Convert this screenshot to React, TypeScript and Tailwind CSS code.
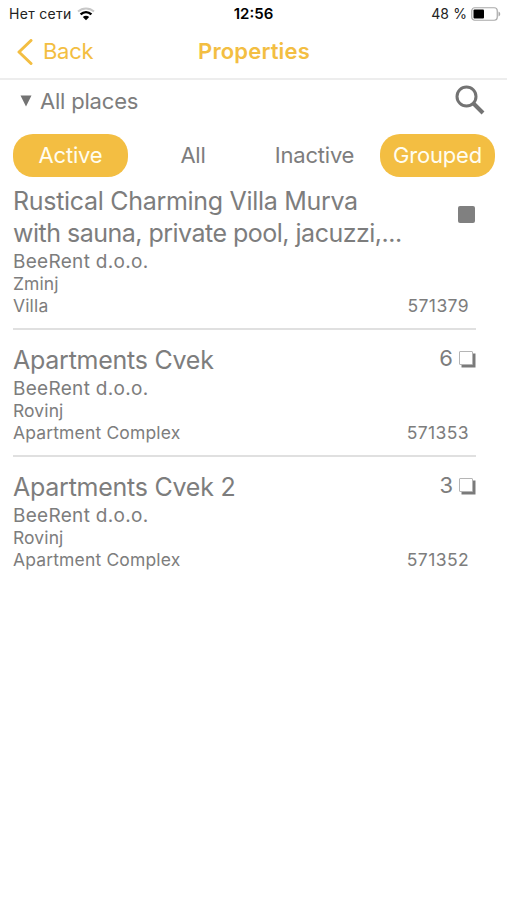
import React from "react";

type Property = {
  title: { text: string; tracking: string }[];
  owner: string;
  place: string;
  kind: string;
  id: string;
  units?: number;
};

const properties: Property[] = [
  {
    title: [
      { text: "Rustical Charming Villa Murva", tracking: "tracking-[-0.3px]" },
      { text: "with sauna, private pool, jacuzzi,...", tracking: "tracking-[-0.51px]" },
    ],
    owner: "BeeRent d.o.o.",
    place: "Zminj",
    kind: "Villa",
    id: "571379",
  },
  {
    title: [{ text: "Apartments Cvek", tracking: "tracking-[-0.25px]" }],
    owner: "BeeRent d.o.o.",
    place: "Rovinj",
    kind: "Apartment Complex",
    id: "571353",
    units: 6,
  },
  {
    title: [{ text: "Apartments Cvek 2", tracking: "tracking-[-0.25px]" }],
    owner: "BeeRent d.o.o.",
    place: "Rovinj",
    kind: "Apartment Complex",
    id: "571352",
    units: 3,
  },
];

function StatusBar() {
  return (
    <div className="grid h-[27px] grid-cols-3 items-center pl-[9px] pr-[6px] text-[14px] text-[#222]">
      <div className="flex items-center gap-[5px]">
        <span className="tracking-[0.3px]">Нет сети</span>
        <svg width="18" height="14" viewBox="0 0 18 14" fill="none">
          <path d="M1 4.600C5.500.400 12.500.400 17 4.600" stroke="#c8c8c8" strokeWidth="2" />
          <path d="M3.600 7.400C6.800 4.400 11.200 4.400 14.400 7.400" stroke="#000" strokeWidth="2.400" />
          <path d="M5.800 10C7.600 8.400 10.400 8.400 12.200 10L9 13.200Z" fill="#000" />
        </svg>
      </div>
      <div className="pr-[3px] pt-[2px] text-center text-[15px] font-semibold text-black">12:56</div>
      <div className="flex items-center justify-end gap-[4px]">
        <span className="tracking-[0.1px]">48 %</span>
        <svg width="30" height="14" viewBox="0 0 30 14">
          <rect x=".75" y=".75" width="25.500" height="12.500" rx="3" fill="#fff" stroke="#a9a9a9" strokeWidth="1.200" />
          <rect x="2.500" y="2.500" width="10.500" height="9" rx="1" fill="#000" />
          <path d="M27.500 4.500C29.800 5.500 29.800 8.500 27.500 9.500Z" fill="#a9a9a9" />
        </svg>
      </div>
    </div>
  );
}

function NavBar() {
  return (
    <div className="grid h-[53px] grid-cols-3 items-center border-b-2 border-[#ededed] px-[17px] pb-[2px] text-[22px] text-[#f3be42]">
      <div className="flex items-center gap-[10px]">
        <svg width="16" height="26" viewBox="0 0 16 26" fill="none">
          <path d="M14 1.500L2 13L14 24.500" stroke="currentColor" strokeWidth="3" strokeLinecap="round" strokeLinejoin="round" />
        </svg>
        <span className="tracking-[-0.3px]">Back</span>
      </div>
      <div className="pl-px text-center font-semibold tracking-[0.15px]">Properties</div>
    </div>
  );
}

function FilterRow() {
  return (
    <div className="flex h-[54px] items-start justify-between pl-[20px] pr-[22px] pt-[5px]">
      <div className="flex h-[32px] items-center gap-[8px]">
        <svg width="12" height="12" viewBox="0 0 12 12">
          <path d="M.5.5H11.500L6 11.500Z" fill="#737373" />
        </svg>
        <span className="text-[22px] tracking-[-0.2px]">All places</span>
      </div>
      <svg width="30" height="30" viewBox="0 0 30 30" fill="none" stroke="#737373">
        <circle cx="11.500" cy="11.500" r="9.500" strokeWidth="3" />
        <path d="M18 18L28 28" strokeWidth="4" />
      </svg>
    </div>
  );
}

function Tabs() {
  const pill = "flex h-[43px] w-[115px] items-center justify-center rounded-[20px] bg-[#f3be42] text-[#fffdf0]";
  return (
    <div className="flex h-[43px] items-center pl-[13px] text-[22px] tracking-[-0.2px]">
      <div className={pill}>Active</div>
      <div className="w-[130px] text-center">All</div>
      <div className="w-[113px] text-center">Inactive</div>
      <div className="w-[9px]" />
      <div className={pill}>Grouped</div>
    </div>
  );
}

function PropertyRow({ item, last }: { item: Property; last: boolean }) {
  return (
    <div className={last ? "pt-[14px]" : "border-b-2 border-[#e0e0e0] pb-[11px] pt-[14px]"}>
      <div className="flex justify-between">
        <div className="text-[25px] leading-[32px]">
          {item.title.map((line) => (
            <div key={line.text} className={`whitespace-nowrap ${line.tracking}`}>
              {line.text}
            </div>
          ))}
        </div>
        {item.units ? (
          <div className="flex h-[29px] items-center gap-[5px]">
            <span className="text-[22px]">{item.units}</span>
            <svg width="18" height="18" viewBox="0 0 18 18">
              <path d="M3.500 3.500H17.500V17.500H3.500Z" fill="#7a7a7a" />
              <rect x="1.500" y="1.500" width="13" height="13" rx=".5" fill="#fff" stroke="#b5b5b5" />
            </svg>
          </div>
        ) : (
          <div className="mr-[1px] mt-[21px] size-[17px] rounded-[2px] bg-[#808080]" />
        )}
      </div>
      <div className="pt-px text-[19px] leading-[24px] tracking-[0.3px]">{item.owner}</div>
      <div className="-mt-px text-[17.500px] leading-[22px] tracking-[0.1px]">{item.place}</div>
      <div className="flex justify-between pr-[7px] text-[17.500px] leading-[22px]">
        <span className="tracking-[0.15px]">{item.kind}</span>
        <span className="tracking-[0.4px]">{item.id}</span>
      </div>
    </div>
  );
}

export default function App() {
  return (
    <div className="h-[900px] w-[507px] overflow-hidden bg-white font-['Inter',sans-serif] text-[#7d7d7d]">
      <StatusBar />
      <NavBar />
      <FilterRow />
      <Tabs />
      <div className="-mt-[6px] ml-[13px] w-[463px]">
        {properties.map((item, i) => (
          <PropertyRow key={item.id} item={item} last={i === properties.length - 1} />
        ))}
      </div>
    </div>
  );
}
